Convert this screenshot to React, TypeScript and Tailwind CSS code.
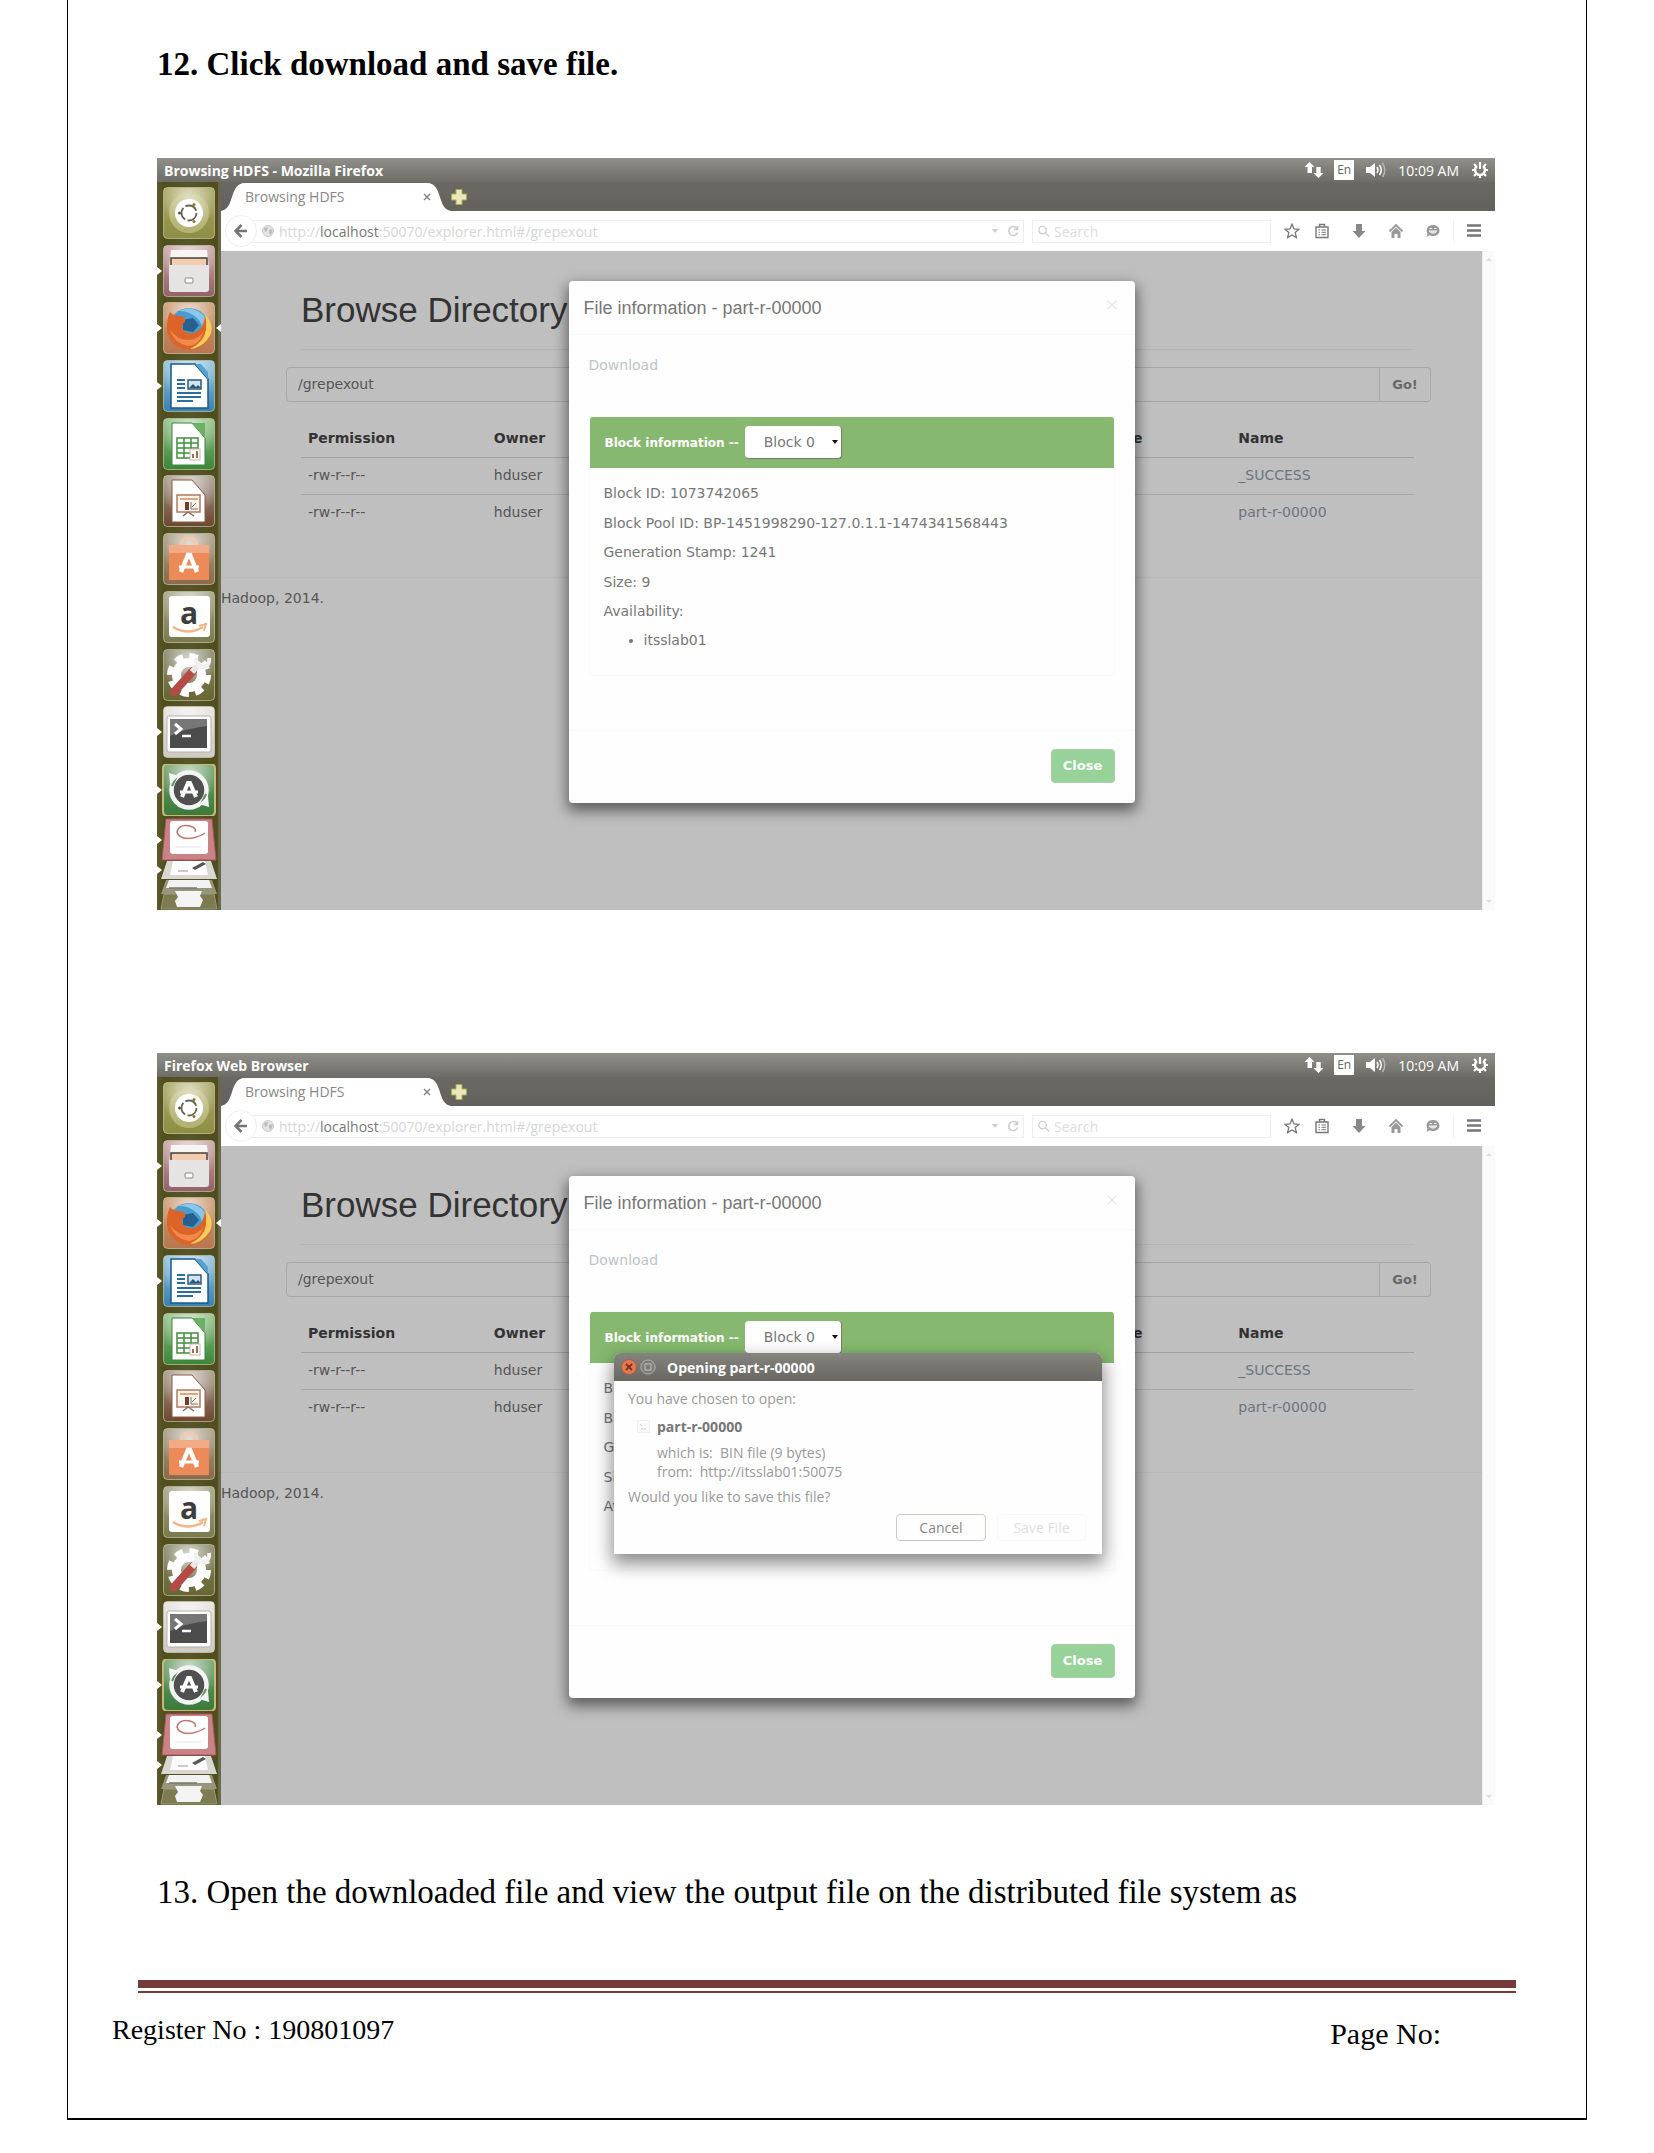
import React from "react";

const UI = "font-['Open_Sans','Noto_Sans',sans-serif]";
const WEB = "font-['DejaVu_Sans',sans-serif]";
const SERIF = "font-['Liberation_Serif',serif]";

function Tile({
  children,
  from,
  to,
  left,
  right,
}: {
  children: React.ReactNode;
  from: string;
  to: string;
  left?: boolean;
  right?: boolean;
}) {
  const id = React.useId();
  return (
    <svg viewBox="0 0 64 52" className="block h-[52px] w-16 shrink-0" aria-hidden="true">
      <defs>
        <linearGradient id={id} x1="0" y1="0" x2="0" y2="1">
          <stop offset="0" stopColor={from} />
          <stop offset="1" stopColor={to} />
        </linearGradient>
        <radialGradient id={id + "g"} cx="0.5" cy="0.2" r="0.6">
          <stop offset="0" stopColor="#fff" stopOpacity="0.7" />
          <stop offset="1" stopColor="#fff" stopOpacity="0" />
        </radialGradient>
      </defs>
      <rect x="6.5" y="0.5" width="51" height="51" rx="4" fill={`url(#${id})`} stroke="#d8d6bd" strokeOpacity="0.6" />
      <rect x="7" y="1" width="50" height="50" rx="4" fill={`url(#${id}g)`} />
      {left && <path d="M0 22 L5 26 L0 30Z" fill="#fff" />}
      {right && <path d="M64 22 L59 26 L64 30Z" fill="#fff" />}
      {children}
    </svg>
  );
}

function LauncherIcons() {
  return (
    <div className="flex min-h-0 flex-1 flex-col justify-between">
      {/* Dash */}
      <Tile from="#a5a35c" to="#8f8e45">
        <circle cx="32" cy="26" r="20" fill="#dedcae" opacity="0.45" />
        <circle cx="32" cy="26" r="14" fill="#fff" />
        <circle cx="32" cy="26" r="7.5" fill="none" stroke="#66654e" strokeWidth="1.8" strokeDasharray="13.2 2.5" />
        <circle cx="22.500" cy="26" r="1.500" fill="#55543a" />
        <circle cx="37" cy="17.500" r="1.500" fill="#8a7a2a" />
        <circle cx="37" cy="34.500" r="1.500" fill="#8a7a2a" />
      </Tile>
      {/* Files */}
      <Tile from="#c9a3a5" to="#93606a" left>
        <path d="M14 5 H50 L52 24 H12Z" fill="#f7f5f2" />
        <rect x="14" y="13" width="36" height="9" fill="#f3cdb0" stroke="#454039" strokeWidth="1.5" />
        <path d="M12 20 H52 V44 Q52 47 49 47 H15 Q12 47 12 44Z" fill="#e6e4e2" />
        <rect x="28" y="33" width="8" height="5" rx="1" fill="#fff" stroke="#888" />
      </Tile>
      {/* Firefox */}
      <Tile from="#c99a72" to="#b97650" left right>
        <circle cx="32" cy="26" r="20" fill="#4a9bd0" />
        <path d="M22 9 Q36 2 47 14 Q52 24 44 32 Q47 22 40 16 Q31 8 22 9Z" fill="#8cc6e8" />
        <path d="M26 18 L36 16 L42 23 L36 30 L26 28Z" fill="#27608f" />
        <path d="M13 10 Q16 14 22 14 Q29 13 28 20 Q24 22 25 26 Q30 34 39 30 Q46 27 48 15 Q56 23 54 32 Q49 47 32 48 Q13 46 10 29 Q9 19 13 10Z" fill="#dd6429" />
        <path d="M48 12 Q58 24 53 34 Q46 46 33 47 Q47 40 49 28 Q50 20 48 12Z" fill="#f6cd5c" />
        <path d="M13 28 Q20 38 32 38 Q42 37 46 30 Q43 43 31 44 Q17 41 13 28Z" fill="#f18a4a" />
      </Tile>
      {/* Writer */}
      <Tile from="#8fc1de" to="#3a81b0" left>
        <path d="M14 4 H38 L51 19 V48 H14Z" fill="#fff" stroke="#17598a" strokeWidth="1.5" />
        <path d="M38 4 L51 19 V12 L44 4Z" fill="#57a2d0" />
        <path d="M20 20 H28 M20 24 H28 M20 28 H28 M20 33 H44 M20 37 H44 M20 41 H36" stroke="#2b6d9e" strokeWidth="2" />
        <rect x="31" y="20" width="13" height="9" fill="#d4e6f2" stroke="#2b5878" strokeWidth="1.5" />
        <path d="M32 28 L36 24 L39 27 L41 25 L44 28Z" fill="#2b5878" />
      </Tile>
      {/* Calc */}
      <Tile from="#8fbf85" to="#3b8638">
        <path d="M15 5 H35 L48 20 V47 H15Z" fill="#fff" stroke="#3b8638" />
        <path d="M35 5 L48 20 V5Z" fill="#6db163" />
        <path d="M20 20 H41 V40 H20Z M20 25 H41 M20 30 H41 M20 35 H41 M27 20 V40 M34 20 V40" fill="none" stroke="#3f8f3d" strokeWidth="1.5" />
        <rect x="33" y="31" width="10" height="11" fill="#fff" stroke="#c9b49f" />
        <path d="M36 40 V36 M40 40 V33" stroke="#a06c55" strokeWidth="2" />
      </Tile>
      {/* Impress */}
      <Tile from="#a5988a" to="#6d4630">
        <path d="M15 5 H35 L48 20 V47 H15Z" fill="#fff" stroke="#8a5a44" />
        <rect x="20" y="20" width="23" height="17" fill="#fbf4ea" stroke="#b07a60" strokeWidth="1.5" />
        <path d="M23 24 H41" stroke="#dfa483" strokeWidth="2" />
        <rect x="28" y="27" width="4" height="8" fill="#6b3f30" />
        <path d="M34 27 V34 H41 M35 32 L39 28" stroke="#777" fill="none" />
        <path d="M31 37 L26 41 M31 37 L37 41" stroke="#8a6a5a" strokeWidth="1.5" />
      </Tile>
      {/* Software centre */}
      <Tile from="#a59a82" to="#8a6a4a">
        <path d="M24 13 Q24 5 32 5 Q40 5 40 13" fill="none" stroke="#f3c9ae" strokeWidth="3" />
        <path d="M12 12 H52 V47 H12Z" fill="#ed8a59" />
        <path d="M12 12 H52 V20 H12Z" fill="#f3ab85" />
        <path d="M24 39 L31 22 H33 L40 39" fill="none" stroke="#fff" strokeWidth="4.5" />
        <path d="M22 34 H42" stroke="#fff" strokeWidth="3" />
      </Tile>
      {/* Amazon */}
      <Tile from="#a3a184" to="#7a7a4f">
        <rect x="12" y="5" width="41" height="41" rx="3" fill="#fff" />
        <text x="32" y="33" textAnchor="middle" fontFamily="Open Sans, sans-serif" fontWeight="700" fontSize="30" fill="#3d3d3d">a</text>
        <path d="M16 36 Q31 45 46 36" fill="none" stroke="#f0b583" strokeWidth="2.5" />
        <path d="M42 35 L49 33 L47 40" fill="none" stroke="#f0b583" strokeWidth="2" />
      </Tile>
      {/* System settings */}
      <Tile from="#86856a" to="#676632">
        <circle cx="32" cy="26" r="12.5" fill="none" stroke="#fff" strokeWidth="9" />
        <circle cx="32" cy="26" r="19" fill="none" stroke="#fff" strokeWidth="6" strokeDasharray="8.4 6.5" />
        <path d="M17 43 L36 22" stroke="#b44b46" strokeWidth="8" strokeLinecap="round" />
        <path d="M35 23 L43 14" stroke="#e8e8e8" strokeWidth="6" />
        <path d="M39 9 Q38 18 47 18 Q53 16 52 9" fill="none" stroke="#f1f1f1" strokeWidth="4" />
      </Tile>
      {/* Terminal */}
      <Tile from="#e4e1dd" to="#cfcac4" left>
        <rect x="10" y="10" width="44" height="36" rx="2" fill="#fff" stroke="#b5b0aa" />
        <rect x="13" y="13" width="37" height="29" fill="#4c4c4c" />
        <path d="M13 13 H50 V20 Q30 22 13 30Z" fill="#777" />
        <path d="M18 18 L24 23 L18 28" fill="none" stroke="#fff" strokeWidth="3" />
        <path d="M25 30 H34" stroke="#fff" strokeWidth="2.5" />
      </Tile>
      {/* Software updater */}
      <Tile from="#6da06b" to="#3a7a3b" left>
        <rect x="6" y="0" width="52" height="52" rx="4" fill="none" stroke="#c8b878" strokeWidth="2" />
        <circle cx="32" cy="26" r="17.5" fill="#505050" stroke="#f4f4f4" strokeWidth="4.5" />
        <path d="M20 12 L15 22 M44 40 L49 30" stroke="#5d8f5b" strokeWidth="2" />
        <path d="M12 9 L22 12 L13 20Z M52 43 L42 40 L51 32Z" fill="#f4f4f4" />
        <path d="M25 33 L31 19 H33 L39 33" fill="none" stroke="#fff" strokeWidth="4" />
        <path d="M23 28 H41" stroke="#fff" strokeWidth="3" />
      </Tile>
    </div>
  );
}

/* Icons that fold away at the foot of the launcher */
function FoldedIcons() {
  return (
    <svg viewBox="0 0 64 92" className="block h-[92px] w-16 shrink-0" aria-hidden="true">
      <path d="M9 1 H55 L59 42 H5Z" fill="#c98286" stroke="#a7565c" />
      <rect x="13" y="3" width="38" height="33" rx="3" fill="#fff" />
      <path d="M33 8 Q22 6 20 14 Q22 22 36 20 Q44 18 48 15 M33 8 Q40 10 38 14" fill="none" stroke="#c0756f" strokeWidth="1.5" />
      <path d="M18 29 H44" stroke="#e4e4e4" />
      <path d="M10 43 H54 L60 61 H4Z" fill="#d9d7d2" />
      <path d="M16 43 H48 L51 57 H13Z" fill="#fbfbfb" />
      <path d="M35 50 L46 44 L49 46 L38 52Z" fill="#555" />
      <path d="M21 53 H31" stroke="#999" />
      <path d="M9 62 H55 L60 76 H4Z" fill="#98967a" />
      <path d="M12 62 H52 L55 70 H9Z" fill="#f2f2f2" />
      <path d="M12 70 H40" stroke="#777" strokeWidth="1.5" />
      <path d="M7 76 H57 L60 91 H4Z" fill="#7d7b52" stroke="#9d9b78" />
      <path d="M18 73 H45 L43 78 L46 82 L43 89 H20 L18 83 L21 79Z" fill="#f4f4f4" />
      <path d="M0 18 L5 22 L0 26Z M0 48 L5 52 L0 56Z" fill="#fff" />
    </svg>
  );
}

function Launcher() {
  return (
    <nav
      aria-label="Launcher"
      className="flex w-16 shrink-0 flex-col gap-[2px] border-r-[3px] border-[#69684f] bg-[linear-gradient(90deg,#5b5a2e,#4f4e1c_12%,#57562b_50%,#4f4e1c_92%)] pt-[5px]"
    >
      <LauncherIcons />
      <FoldedIcons />
    </nav>
  );
}

function StatusArea() {
  return (
    <div className="flex items-center text-white">
      <svg viewBox="0 0 20 18" className="mr-[10px] h-[18px] w-5" aria-hidden="true">
        <path d="M5.500 1 L10.500 6 H8 V12 H3.500 V6 H0.500Z M14.500 17 L9.500 12 H12.300 V6 H16.700 V12 H19.500Z" fill="#fff" />
      </svg>
      <span className="mr-3 flex h-5 w-5 items-center justify-center bg-white text-[12px] text-[#666]">En</span>
      <svg viewBox="0 0 20 18" className="mr-3 h-[18px] w-5" aria-hidden="true">
        <path d="M0 6 H4 L9 2 V16 L4 12 H0Z" fill="#fff" />
        <path d="M11 6 Q13 9 11 12 M13.500 4 Q17 9 13.500 14" fill="none" stroke="#fff" strokeWidth="1.500" />
        <path d="M16.500 2 Q21 9 16.500 16" fill="none" stroke="#b9b8b2" strokeWidth="1.500" />
      </svg>
      <span className="mr-3 text-[14px]">10:09 AM</span>
      <svg viewBox="0 0 18 18" className="h-[18px] w-[18px]" aria-hidden="true">
        <path d="M6 5 A5 5 0 1 0 12 5" fill="none" stroke="#fff" strokeWidth="2.500" />
        <path d="M9 1 V8 M1 9 H4 M14 9 H17 M3 3 L5 5 M15 3 L13 5 M3 15 L5 13 M15 15 L13 13 M9 14 V17" stroke="#fff" strokeWidth="2.200" />
      </svg>
    </div>
  );
}

function TabStrip() {
  return (
    <div className="flex h-[29px] items-center bg-[linear-gradient(#6a6964,#62615b)]">
      <div className="relative h-[29px] w-[230px]">
        <svg viewBox="0 0 232 29" className="absolute inset-0 h-full w-full" aria-hidden="true">
          <path d="M0 29 C14 28 8 1 24 1 H208 C224 1 218 28 232 29Z" fill="#fff" />
        </svg>
        <div className="relative flex h-full items-center justify-between pr-5 pl-6 text-[14px] text-[#888]">
          <span>Browsing HDFS</span>
          <button aria-label="Close tab" className="block">
            <svg viewBox="0 0 8 8" className="h-2 w-2">
              <path d="M1 1 L7 7 M7 1 L1 7" stroke="#888" strokeWidth="1.500" />
            </svg>
          </button>
        </div>
      </div>
      <button aria-label="New tab" className="block">
        <svg viewBox="0 0 16 16" className="h-4 w-4">
          <path d="M5 0.500 H11 V5 H15.500 V11 H11 V15.500 H5 V11 H0.500 V5 H5Z" fill="#e9e8b8" stroke="#a9a860" />
        </svg>
      </button>
    </div>
  );
}

function Toolbar() {
  return (
    <div className="flex h-10 items-center bg-white pr-[13px] text-[14px]">
      <button aria-label="Back" className="z-10 ml-1 flex h-8 w-8 items-center justify-center rounded-full border border-[#eee] bg-white">
        <svg viewBox="0 0 14 14" className="h-[14px] w-[14px]">
          <path d="M7.500 1 L1.500 7 L7.500 13 M2 7 H13" fill="none" stroke="#757575" strokeWidth="2.600" />
        </svg>
      </button>
      <div className="-ml-2 flex h-[23px] min-w-0 flex-1 items-center border-y border-r border-[#eee] pl-3">
        <svg viewBox="0 0 14 14" className="mr-1 h-[14px] w-[14px] shrink-0" aria-hidden="true">
          <circle cx="7" cy="7" r="5.500" fill="#e4e4e4" stroke="#ccc" />
          <path d="M3 4 L7 3 L6 7 L4 8Z M8 6 L12 5 L10 11 L8 9Z" fill="#bbb" />
        </svg>
        <div role="textbox" aria-label="Address" className="min-w-0 flex-1 truncate text-[#d6d6d6]">
          http://<span className="text-[#777]">localhost</span>:50070/explorer.html#/grepexout
        </div>
        <svg viewBox="0 0 8 6" className="mr-2 h-[6px] w-2" aria-hidden="true">
          <path d="M1 1 H7 L4 5Z" fill="#ccc" />
        </svg>
        <button aria-label="Reload" className="mr-1 block">
          <svg viewBox="0 0 12 12" className="h-3 w-3">
            <path d="M10 3.500 A4.500 4.500 0 1 0 10.500 7.500 M10.500 1 V4.500 H7" fill="none" stroke="#ccc" strokeWidth="1.500" />
          </svg>
        </button>
      </div>
      <label className="ml-2 flex h-[23px] w-[239px] items-center gap-1 border border-[#eee] pl-1">
        <svg viewBox="0 0 14 14" className="h-[14px] w-[14px]" aria-hidden="true">
          <circle cx="6" cy="6" r="4" fill="none" stroke="#d0d0d0" strokeWidth="1.500" />
          <path d="M9 9 L13 13" stroke="#d0d0d0" strokeWidth="1.500" />
        </svg>
        <input
          aria-label="Search"
          placeholder="Search"
          className="w-full bg-transparent outline-none placeholder:text-[#ddd]"
        />
      </label>
      <div className="ml-[13px] flex items-center">
        <svg viewBox="0 0 16 16" className="mr-[14px] h-4 w-4" aria-hidden="true">
          <path d="M8 1.200 L10 6 L15 6.300 L11.200 9.600 L12.400 14.600 L8 11.900 L3.600 14.600 L4.800 9.600 L1 6.300 L6 6Z" fill="none" stroke="#777" strokeWidth="1.300" />
        </svg>
        <svg viewBox="0 0 16 16" className="mr-[21px] h-4 w-4" aria-hidden="true">
          <path d="M2 4 H14 V14.500 H2Z M5.500 4 V1.500 H10.500 V4" fill="none" stroke="#777" strokeWidth="1.400" />
          <path d="M4.500 7 H6 M7.500 7 H12 M4.500 9.300 H6 M7.500 9.300 H12 M4.500 11.700 H6 M7.500 11.700 H12" stroke="#777" />
        </svg>
        <svg viewBox="0 0 16 16" className="mr-[21px] h-4 w-4" aria-hidden="true">
          <path d="M5 1 H11 V8 H14.500 L8 15 L1.500 8 H5Z" fill="#888" />
        </svg>
        <svg viewBox="0 0 16 16" className="mr-[21px] h-4 w-4" aria-hidden="true">
          <path d="M1.500 8.500 L8 2 L14.500 8.500" fill="none" stroke="#999" strokeWidth="1.800" />
          <path d="M3.500 9 L8 4.500 L12.500 9 V15 H9.500 V11 H6.500 V15 H3.500Z" fill="#999" />
        </svg>
        <svg viewBox="0 0 16 16" className="h-4 w-4" aria-hidden="true">
          <path d="M8 2 C12 2 14.500 4.500 14.500 7.500 C14.500 10.500 12 13 8 13 C6.500 13 5.500 12.700 4.500 12.200 L1.500 14 L2.500 10.500 C0.500 7 2 2 8 2Z" fill="#9a9a9a" />
          <path d="M4 8 Q8 12.500 12 8Z M4.500 5.500 H7 M9 5.500 H11.500" fill="#ddd" stroke="#eee" />
        </svg>
        <span className="mx-3 h-6 w-px bg-[#f3f3f3]" />
        <button aria-label="Menu" className="block">
          <svg viewBox="0 0 16 16" className="h-4 w-4">
            <path d="M1 2.500 H15 M1 7.500 H15 M1 12.500 H15" stroke="#777" strokeWidth="2.500" />
          </svg>
        </button>
      </div>
    </div>
  );
}

function DirectoryPage() {
  return (
    <div className={`${WEB} pt-[35px] text-[14px] text-[#555]`}>
      <div className="pr-[51px] pl-[65px]">
        <div className="pr-[17px] pl-[15px]">
          <h1 className="border-b border-[#b4b4b4] pb-[15px] font-['Liberation_Sans',sans-serif] text-[35px] leading-[48px] text-[#333]">
            Browse Directory
          </h1>
        </div>
        <form className="mt-[17px] flex h-[35px]" onSubmit={(e) => e.preventDefault()}>
          <input
            aria-label="Directory"
            defaultValue="/grepexout"
            className="min-w-0 flex-1 rounded-l border border-[#a6a6a6] bg-transparent px-[11px] outline-none"
          />
          <button className="w-[51px] rounded-r border border-l-0 border-[#a6a6a6] text-[13px] font-bold text-[#666]">Go!</button>
        </form>
        <div className="mt-[18px] pr-[17px] pl-[15px]">
          <table className="w-full table-fixed border-collapse text-left">
            <thead>
              <tr className="h-[37px] border-b border-[#a0a0a0] text-[#333]">
                <th className="w-[16.7%] px-[7px]">Permission</th>
                <th className="w-[51%] px-[7px]">Owner</th>
                <th className="w-[15.8%] px-2 whitespace-nowrap">Block Size</th>
                <th className="px-2">Name</th>
              </tr>
            </thead>
            <tbody>
              {["_SUCCESS", "part-r-00000"].map((name) => (
                <tr key={name} className="h-[37px] border-b border-[#a8a8a8] last:border-b-0">
                  <td className="px-[7px]">-rw-r--r--</td>
                  <td className="px-[7px]">hduser</td>
                  <td />
                  <td className="px-2">
                    <a href="#file" className="text-[#6b7580]">{name}</a>
                  </td>
                </tr>
              ))}
            </tbody>
          </table>
        </div>
      </div>
      <footer className="mt-[46px] border-t border-[#b9b9b9] pt-[10px] leading-5">Hadoop, 2014.</footer>
    </div>
  );
}

function FileModal() {
  return (
    <section
      aria-label="File information"
      className={`${WEB} absolute top-[30px] left-1/2 w-[566px] -translate-x-1/2 rounded bg-[#fefefe] text-[14px] text-[#777] shadow-[0_6px_14px_2px_rgba(0,0,0,0.5)]`}
    >
      <header className="flex h-[54px] items-start justify-between border-b border-[#fafafa] px-[15px] pt-[14px]">
        <h2 className="font-['Liberation_Sans',sans-serif] text-[18px] leading-[26px] text-[#777]">File information - part-r-00000</h2>
        <button aria-label="Close" className="mt-1 mr-[2px] block">
          <svg viewBox="0 0 12 12" className="h-3 w-3">
            <path d="M1.500 1.500 L10.500 10.500 M10.500 1.500 L1.500 10.500" stroke="#e8e8e8" strokeWidth="1.500" />
          </svg>
        </button>
      </header>
      <div className="px-5 pt-5">
        <a href="#download" className="block leading-5 text-[#bcc4c8]">Download</a>
        <div className="mt-[41px] rounded-[3px] border border-[#fafafa]">
          <div className="flex h-[51px] items-center gap-[6px] rounded-t-[3px] bg-[#86b96f] pl-[15px]">
            <span className="text-[12px] font-bold whitespace-nowrap text-white">Block information --</span>
            <div className="relative">
              <select
                aria-label="Block information"
                className="block h-[33px] w-[97px] appearance-none rounded-sm border-r border-b border-[#777] bg-white pl-[19px] text-[14px] text-[#777]"
              >
                <option>Block 0</option>
              </select>
              <svg viewBox="0 0 6 4" className="pointer-events-none absolute top-[14px] right-1 h-1 w-[6px]" aria-hidden="true">
                <path d="M0 0 H6 L3 4Z" fill="#111" />
              </svg>
            </div>
          </div>
          <div className="h-[207px] pt-[15px] pl-[14px] leading-5">
            <p className="mb-[10px]">Block ID: 1073742065</p>
            <p className="mb-[9px]">Block Pool ID: BP-1451998290-127.0.1.1-1474341568443</p>
            <p className="mb-[10px]">Generation Stamp: 1241</p>
            <p className="mb-[9px]">Size: 9</p>
            <p className="mb-[9px]">Availability:</p>
            <ul className="list-disc pl-10">
              <li>itsslab01</li>
            </ul>
          </div>
        </div>
      </div>
      <footer className="mt-[54px] flex h-[73px] justify-end border-t border-[#fafafa] pt-[18px] pr-5">
        <button className="h-[34px] w-[64px] rounded-sm border border-[#a9cfaa] bg-[#97d299] text-[13px] font-bold text-white">Close</button>
      </footer>
    </section>
  );
}

function SaveDialog() {
  return (
    <section
      aria-label="Opening part-r-00000"
      className="absolute top-[276px] left-1/2 w-[488px] -translate-x-1/2 rounded-t-md bg-[#fefefe] text-[14px] text-[#999] shadow-[0_8px_18px_2px_rgba(0,0,0,0.45)]"
    >
      <header className="flex h-7 items-center rounded-t-md bg-[linear-gradient(#85847f,#686762)] pl-[7px] font-bold text-white">
        <button aria-label="Close" className="mr-[3px] block">
          <svg viewBox="0 0 16 16" className="h-4 w-4">
            <circle cx="8" cy="8" r="7.500" fill="#e5774f" stroke="#9d6450" />
            <path d="M5 5 L11 11 M11 5 L5 11" stroke="#7c3420" strokeWidth="1.800" />
          </svg>
        </button>
        <button aria-label="Maximize" className="mr-[11px] block">
          <svg viewBox="0 0 16 16" className="h-4 w-4">
            <circle cx="8" cy="8" r="7" fill="#7c7b76" stroke="#b5b4ae" />
            <rect x="5" y="5" width="6" height="6" fill="none" stroke="#c5c4be" />
          </svg>
        </button>
        Opening part-r-00000
      </header>
      <div className="pt-2 pr-4 pb-[13px] pl-[14px]">
        <p className="leading-5">You have chosen to open:</p>
        <div className="mt-2 flex pl-[9px]">
          <svg viewBox="0 0 14 14" className="mt-[3px] mr-[6px] h-[14px] w-[14px]" aria-hidden="true">
            <rect x="0.500" y="0.500" width="12" height="12" fill="#fafafa" stroke="#f0f0f0" />
            <path d="M3 4 L5 6 M4 9 H9" stroke="#ccc" />
          </svg>
          <div>
            <p className="leading-5 font-bold text-[#777]">part-r-00000</p>
            <p className="mt-[6px] leading-[19px]">
              which is: &nbsp;BIN file (9 bytes)
              <br />
              from: &nbsp;http://itsslab01:50075
            </p>
          </div>
        </div>
        <p className="mt-[6px] leading-5">Would you like to save this file?</p>
        <div className="mt-[7px] flex justify-end gap-[11px]">
          <button className="h-[27px] w-[90px] rounded border border-[#cfc9c0] text-[#888]">Cancel</button>
          <button className="h-[27px] w-[89px] rounded border border-[#f7f7f7] text-[#dedede]">Save File</button>
        </div>
      </div>
    </section>
  );
}

function Desktop({ title, saving = false }: { title: string; saving?: boolean }) {
  return (
    <div className={`${UI} overflow-hidden bg-[#bfbfbf]`}>
      <div className="flex h-6 items-center justify-between bg-[linear-gradient(#908f89,#6d6c67)] pr-[6px] pl-[7px]">
        <span className="text-[14px] font-bold text-white">{title}</span>
        <StatusArea />
      </div>
      <div className="flex h-[728px]">
        <Launcher />
        <div className="relative flex min-w-0 flex-1 flex-col">
          <TabStrip />
          <Toolbar />
          <div className="flex min-h-0 flex-1">
            <div className="relative min-w-0 flex-1 bg-[#bfbfbf]">
              <DirectoryPage />
              <FileModal />
            </div>
            <div className="flex w-[13px] flex-col items-center justify-between border-l border-[#ededed] bg-[#fafafa] py-[6px]">
              <svg viewBox="0 0 6 4" className="h-1 w-[6px]" aria-hidden="true">
                <path d="M0 4 H6 L3 1Z" fill="#ddd" />
              </svg>
              <svg viewBox="0 0 6 4" className="h-1 w-[6px]" aria-hidden="true">
                <path d="M0 0 H6 L3 3Z" fill="#ddd" />
              </svg>
            </div>
          </div>
          {saving && <SaveDialog />}
        </div>
      </div>
    </div>
  );
}

export default function App() {
  return (
    <div className="bg-white pb-[33px] text-black">
      <main className={`${SERIF} mx-[67px] border-x border-b-2 border-black pt-11`}>
        <div className="pr-[91px] pl-[89px]">
          <h2 className="text-[33px] leading-10 font-bold">12. Click download and save file.</h2>
          <div className="mt-[74px]">
            <Desktop title="Browsing HDFS - Mozilla Firefox" />
          </div>
          <div className="mt-[143px]">
            <Desktop title="Firefox Web Browser" saving />
          </div>
          <p className="mt-[67px] text-[33px] leading-10">
            13. Open the downloaded file and view the output file on the distributed file system as
          </p>
        </div>
        <footer className="mt-[68px]">
          <div className="mx-[70px] h-[13px] border-t-8 border-b-2 border-[#753b38]" />
          <div className="mt-[17px] flex items-start justify-between pr-[145px] pb-16 pl-11 leading-10">
            <span className="text-[28px]">Register No : 190801097</span>
            <span className="pt-1 text-[30px]">Page No:</span>
          </div>
        </footer>
      </main>
    </div>
  );
}
